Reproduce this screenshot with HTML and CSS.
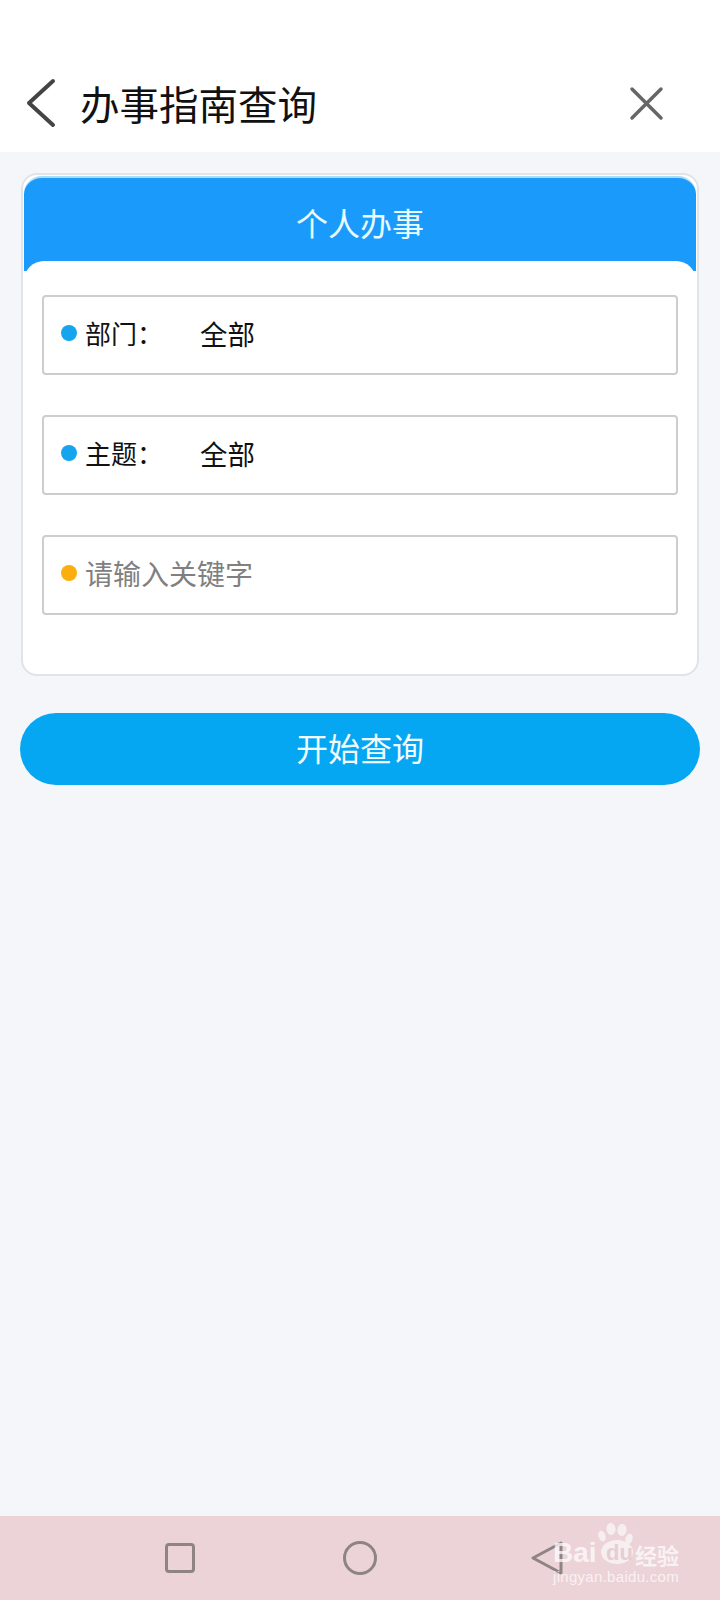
FILE: index.html
```html
<!doctype html>
<html>
  <head>
    <meta charset="utf-8">
    <title>办事指南查询</title>
    <link rel="stylesheet" href="styles.css">
  </head>
  <body>

    <header class="topbar">
      <svg class="back" width="34" height="50" viewBox="0 0 34 50">
        <path d="M30 3 L6 25 L30 47" fill="none" stroke="#444" stroke-width="4" stroke-linecap="round" stroke-linejoin="round"/>
      </svg>
      <h1 class="title">办事指南查询</h1>
      <svg class="close" width="36" height="36" viewBox="0 0 36 36">
        <path d="M4 4 L33 33 M33 4 L4 33" fill="none" stroke="#666" stroke-width="3.5" stroke-linecap="round"/>
      </svg>
    </header>

    <main class="content">
      <section class="card">
        <div class="card-head">个人办事</div>
        <div class="card-body">
          <div class="field">
            <i class="dot"></i>
            <span class="label">部门：</span>
            <span class="value">全部</span>
          </div>
          <div class="field">
            <i class="dot"></i>
            <span class="label">主题：</span>
            <span class="value">全部</span>
          </div>
          <div class="field">
            <i class="dot dot-orange"></i>
            <span class="hint">请输入关键字</span>
          </div>
        </div>
      </section>
      <button class="search">开始查询</button>
    </main>

    <nav class="navbar">
      <svg width="34" height="34" viewBox="0 0 34 34">
        <rect x="3.5" y="3.5" width="27" height="27" rx="2.5" fill="none" stroke="#8e8484" stroke-width="3"/>
      </svg>
      <svg class="nav-home" width="36" height="36" viewBox="0 0 36 36">
        <circle cx="18" cy="18" r="15.5" fill="none" stroke="#8e8484" stroke-width="3"/>
      </svg>
      <svg class="nav-back" width="34" height="34" viewBox="0 0 34 34">
        <path d="M31 2 L3 17 L31 32 Z" fill="none" stroke="#8e8484" stroke-width="3" stroke-linejoin="round"/>
      </svg>
    </nav>

    <div class="watermark">
      <svg class="paw" width="38" height="42" viewBox="0 0 38 42">
        <ellipse cx="5" cy="13" rx="3.5" ry="5.5" fill="#fff" transform="rotate(-18 5 13)"/>
        <ellipse cx="14" cy="6" rx="4.5" ry="6" fill="#fff" transform="rotate(-8 14 6)"/>
        <ellipse cx="25" cy="7" rx="4.5" ry="6" fill="#fff" transform="rotate(8 25 7)"/>
        <ellipse cx="32" cy="16" rx="3.5" ry="5.5" fill="#fff" transform="rotate(18 32 16)"/>
        <ellipse cx="20" cy="29" rx="16" ry="12" fill="#fff"/>
      </svg>
      <b class="wm-bai">Bai</b>
      <b class="wm-du">du</b>
      <span class="wm-cn">经验</span>
      <div class="wm-url">jingyan.baidu.com</div>
    </div>

  </body>
</html>
```

FILE: styles.css
```css
* {
  margin: 0;
  padding: 0;
  box-sizing: border-box;
}
html, body {
  height: 100%;
  overflow: hidden;
}
body {
  position: relative;
  display: flex;
  flex-direction: column;
  background: #f4f6fa;
  font-family: "Noto Sans CJK SC", "Noto Sans", sans-serif;
}
.topbar {
  height: 152px;
  flex: none;
  background: #fff;
  display: flex;
  align-items: center;
  padding: 54px 56px 0 23px;
}
.back {
  flex: none;
}
.title {
  flex: 1;
  margin-left: 23px;
  font-size: 39.5px;
  font-weight: 400;
  color: #111;
  line-height: 50px;
}
.close {
  flex: none;
}
.content {
  flex: 1;
  padding: 21px 20px 0;
}
.card {
  margin: 0 1px;
  height: 503px;
  background: #fff;
  border: 2px solid #dfe3ea;
  border-radius: 16px;
  padding: 1px;
}
.card-head {
  height: 95px;
  background: #1a9bfb;
  border-top: 2px solid #a9dcf6;
  border-radius: 18px 18px 0 0;
  color: #e9fbff;
  font-size: 32px;
  line-height: 88px;
  text-align: center;
}
.card-body {
  position: relative;
  margin-top: -10px;
  background: #fff;
  border-radius: 20px 20px 0 0;
  padding: 34px 18px 0;
  display: flex;
  flex-direction: column;
  gap: 40px;
}
.field {
  height: 80px;
  border: 2px solid #cdcdd0;
  border-radius: 4px;
  background: #fff;
  display: flex;
  align-items: center;
  padding: 0 0 5px 17px;
  font-size: 26px;
  color: #111;
}
.dot {
  flex: none;
  width: 16px;
  height: 16px;
  border-radius: 50%;
  background: #14a5ee;
  margin-right: 8px;
}
.dot-orange {
  background: #fdae0f;
}
.label {
  width: 115px;
  flex: none;
}
.value {
  font-size: 27.5px;
}
.hint {
  font-size: 28px;
  color: #808080;
}
.search {
  display: block;
  width: 100%;
  height: 72px;
  margin-top: 37px;
  padding-bottom: 4px;
  border: 0;
  border-radius: 36px;
  background: #05a7f3;
  color: #f2fcff;
  font-family: inherit;
  font-size: 32px;
}
.navbar {
  height: 84px;
  flex: none;
  background: #ecd3d8;
  display: flex;
  align-items: center;
  padding-left: 163px;
}
.nav-home {
  margin-left: 145px;
}
.nav-back {
  margin-left: 152px;
}
.watermark {
  position: absolute;
  left: 553px;
  top: 1522px;
  width: 130px;
  height: 66px;
  color: rgba(255, 255, 255, .72);
}
.paw {
  position: absolute;
  left: 44px;
  top: 1px;
  opacity: .62;
}
.wm-bai {
  position: absolute;
  left: 0;
  top: 17px;
  font-family: "Liberation Sans", sans-serif;
  font-size: 28px;
  line-height: 28px;
}
.wm-du {
  position: absolute;
  left: 53px;
  top: 20px;
  font-family: "Liberation Sans", sans-serif;
  font-size: 22px;
  line-height: 22px;
  color: #e6cdd2;
}
.wm-cn {
  position: absolute;
  left: 82px;
  top: 20px;
  font-size: 22px;
  font-weight: 700;
  line-height: 24px;
  white-space: nowrap;
}
.wm-url {
  position: absolute;
  left: 0;
  top: 46px;
  font-family: "Liberation Sans", sans-serif;
  font-size: 15px;
  letter-spacing: .3px;
  line-height: 17px;
  white-space: nowrap;
}
```
